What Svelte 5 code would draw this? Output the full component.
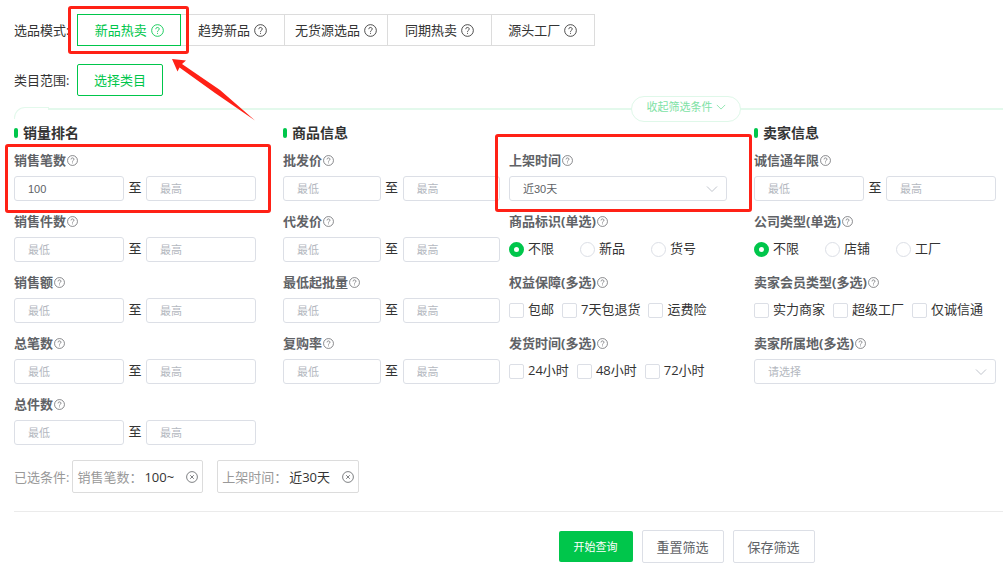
<script lang="ts">
	interface Field {
		label: string;
		kind: 'range' | 'select' | 'radio' | 'checkbox';
		name: string;
		low?: string;
		value?: string;
		options?: string[];
		marked?: boolean;
	}

	interface Section {
		title: string;
		columns: Field[][];
	}

	const modes = ['新品热卖', '趋势新品', '无货源选品', '同期热卖', '源头工厂'];
	let activeMode = $state('新品热卖');

	const sections: Section[] = [
		{
			title: '销量排名',
			columns: [
				[
					{ label: '销售笔数', kind: 'range', name: 'orders', low: '100', marked: true },
					{ label: '销售件数', kind: 'range', name: 'pieces' },
					{ label: '销售额', kind: 'range', name: 'sales' },
					{ label: '总笔数', kind: 'range', name: 'total-orders' },
					{ label: '总件数', kind: 'range', name: 'total-pieces' }
				]
			]
		},
		{
			title: '商品信息',
			columns: [
				[
					{ label: '批发价', kind: 'range', name: 'wholesale' },
					{ label: '代发价', kind: 'range', name: 'dropship' },
					{ label: '最低起批量', kind: 'range', name: 'minimum' },
					{ label: '复购率', kind: 'range', name: 'repurchase' }
				],
				[
					{ label: '上架时间', kind: 'select', name: 'listed', value: '近30天', marked: true },
					{ label: '商品标识(单选)', kind: 'radio', name: 'tag', options: ['不限', '新品', '货号'] },
					{
						label: '权益保障(多选)',
						kind: 'checkbox',
						name: 'rights',
						options: ['包邮', '7天包退货', '运费险']
					},
					{
						label: '发货时间(多选)',
						kind: 'checkbox',
						name: 'shipping',
						options: ['24小时', '48小时', '72小时']
					}
				]
			]
		},
		{
			title: '卖家信息',
			columns: [
				[
					{ label: '诚信通年限', kind: 'range', name: 'years' },
					{
						label: '公司类型(单选)',
						kind: 'radio',
						name: 'company',
						options: ['不限', '店铺', '工厂']
					},
					{
						label: '卖家会员类型(多选)',
						kind: 'checkbox',
						name: 'member',
						options: ['实力商家', '超级工厂', '仅诚信通']
					},
					{ label: '卖家所属地(多选)', kind: 'select', name: 'location' }
				]
			]
		}
	];

	let chips = $state([
		{ label: '销售笔数', value: '100~' },
		{ label: '上架时间', value: '近30天' }
	]);

	const removeChip = (label: string) => {
		chips = chips.filter((c) => c.label !== label);
	};
</script>

{#snippet help()}
	<svg class="help" viewBox="0 0 12 12" aria-hidden="true">
		<circle cx="6" cy="6" r="5.4" />
		<path d="M4.4 4.8C4.4 2.6 7.6 2.7 7.6 4.7C7.6 5.8 6 5.8 6 7.2M6 8.2V9.1" />
	</svg>
{/snippet}

{#snippet chevron()}
	<svg class="chevron" viewBox="0 0 12 12" aria-hidden="true">
		<path d="M1 3.5L6 8.5L11 3.5" />
	</svg>
{/snippet}

{#snippet fieldItem(field: Field)}
	<div class="field" role="group" aria-labelledby="{field.name}-label">
		<div class="field-label">
			{#if field.kind === 'select'}
				<label id="{field.name}-label" for={field.name}>{field.label}</label>
			{:else}
				<span id="{field.name}-label">{field.label}</span>
			{/if}
			{@render help()}
		</div>
		{#if field.kind === 'range'}
			<div class="range">
				<input type="text" placeholder="最低" aria-label="{field.label}最低" value={field.low ?? ''} />
				<span>至</span>
				<input type="text" placeholder="最高" aria-label="{field.label}最高" />
			</div>
		{:else if field.kind === 'select'}
			<div class="select">
				<select id={field.name} class:empty={!field.value}>
					<option>{field.value ?? '请选择'}</option>
				</select>
				{@render chevron()}
			</div>
		{:else}
			<div class="options {field.kind}">
				{#each field.options ?? [] as option, i}
					<label>
						{#if field.kind === 'radio'}
							<input type="radio" name={field.name} checked={i === 0} />
						{:else}
							<input type="checkbox" name={field.name} />
						{/if}
						<span>{option}</span>
					</label>
				{/each}
			</div>
		{/if}
		{#if field.marked}
			<div class="mark {field.kind}-mark"></div>
		{/if}
	</div>
{/snippet}

<main>
	<div class="row">
		<span class="row-label">选品模式:</span>
		<div class="modes">
			{#each modes as mode}
				<button class:active={mode === activeMode} onclick={() => (activeMode = mode)}>
					{mode}
					{@render help()}
				</button>
			{/each}
			<div class="mark mode-mark"></div>
			<svg class="arrow" viewBox="0 0 84 62" aria-hidden="true">
				<path d="M0 0L14 1.5L10 5L48 31L83 61.5L43 34L7.5 8.5L5.5 12.5Z" />
			</svg>
		</div>
	</div>
	<div class="row">
		<span class="row-label">类目范围:</span>
		<button class="category">选择类目</button>
	</div>

	<div class="panel">
		<button class="collapse">收起筛选条件 {@render chevron()}</button>
		<div class="sections">
			{#each sections as section}
				<section>
					<h2>{section.title}</h2>
					<div class="columns" class:double={section.columns.length > 1}>
						{#each section.columns as column}
							<div class="column">
								{#each column as field}
									{@render fieldItem(field)}
								{/each}
							</div>
						{/each}
					</div>
				</section>
			{/each}
		</div>
	</div>

	<div class="chosen">
		<span>已选条件:</span>
		{#each chips as chip}
			<div class="chip">
				<span>{chip.label}：</span>
				<b>{chip.value}</b>
				<button aria-label="删除{chip.label}" onclick={() => removeChip(chip.label)}>
					<svg viewBox="0 0 12 12" aria-hidden="true">
						<circle cx="6" cy="6" r="5.4" />
						<path d="M4.2 4.2L7.8 7.8M7.8 4.2L4.2 7.8" />
					</svg>
				</button>
			</div>
		{/each}
	</div>

	<div class="actions">
		<button class="primary">开始查询</button>
		<button>重置筛选</button>
		<button>保存筛选</button>
	</div>
</main>

<style>
	:global(body) {
		margin: 0;
		background: #fff;
	}

	main {
		padding: 14px 0 14px 14px;
		color: #333;
		font-family: 'Open Sans', 'Noto Sans CJK SC', sans-serif;
		font-size: 13px;
		line-height: 20px;
		overflow: hidden;
	}

	main * {
		box-sizing: border-box;
	}

	button,
	input,
	select {
		margin: 0;
		font-family: inherit;
		font-size: 13px;
		color: inherit;
	}

	button {
		padding: 0;
		background: #fff;
		line-height: 20px;
		white-space: nowrap;
		cursor: pointer;
	}

	svg {
		flex: none;
		fill: none;
		stroke: currentColor;
	}

	.help {
		width: 11px;
		height: 11px;
		stroke-width: 0.8;
	}

	.chevron {
		width: 12px;
		height: 12px;
	}

	.row {
		display: flex;
		align-items: center;
		margin-bottom: 18px;
	}

	.row-label {
		width: 63px;
		white-space: nowrap;
	}

	.modes {
		position: relative;
		display: flex;
		width: 518px;
	}

	.modes > button {
		display: flex;
		flex: 1;
		align-items: center;
		justify-content: center;
		gap: 4px;
		height: 32px;
		border: 1px solid #dcdcdc;
		border-left-width: 0;
	}

	.modes > button.active {
		border: 1px solid #00c64b;
		color: #00c64b;
	}

	.modes .help {
		width: 13px;
		height: 13px;
	}

	.category {
		width: 86px;
		height: 32px;
		border: 1px solid #00c64b;
		border-radius: 2px;
		color: #00c64b;
	}

	/* annotation frames and arrow, laid over the form */
	.mark {
		position: absolute;
		z-index: 2;
		border: 3px solid #ff2116;
		border-radius: 3px;
		pointer-events: none;
	}

	.mode-mark {
		top: -8px;
		left: -9px;
		width: 121px;
		height: 48px;
	}

	.range-mark {
		inset: -6px -15px -12px -9px;
	}

	.select-mark {
		inset: -16px -25px -11px -14px;
	}

	.arrow {
		position: absolute;
		z-index: 2;
		top: 45px;
		left: 95px;
		width: 84px;
		height: 62px;
		fill: #ff2116;
		stroke: none;
		pointer-events: none;
	}

	.panel {
		position: relative;
		margin-top: -18px;
	}

	.panel::before {
		content: '';
		position: absolute;
		top: 11px;
		left: 0;
		width: 34px;
		height: 11px;
		border: 1px solid #e3f9ec;
		border-width: 1px 0 0 1px;
		border-radius: 11px 0 0 0;
	}

	.panel::after {
		content: '';
		position: absolute;
		top: 12px;
		left: 34px;
		right: 0;
		height: 2px;
		background: #e3f9ec;
	}

	.collapse {
		position: relative;
		z-index: 1;
		display: flex;
		align-items: center;
		justify-content: center;
		gap: 3px;
		width: 110px;
		height: 26px;
		margin-left: auto;
		margin-right: 262px;
		padding-bottom: 4px;
		border: 1px solid #dff8e9;
		border-radius: 13px;
		color: #80e2a5;
		font-size: 11px;
	}

	.collapse .chevron {
		width: 10px;
		height: 10px;
	}

	.sections {
		display: grid;
		grid-template-columns: 242fr 444fr 242fr;
		gap: 27px;
		padding-right: 7px;
	}

	h2 {
		display: flex;
		align-items: center;
		gap: 5px;
		margin: 0 0 6px;
		font-size: 14px;
		line-height: 22px;
		font-weight: 700;
	}

	h2::before {
		content: '';
		width: 4px;
		height: 10px;
		border-radius: 2px;
		background: #00c64b;
	}

	.columns {
		display: grid;
		gap: 9px;
	}

	.columns.double {
		grid-template-columns: 217fr 218fr;
	}

	.field {
		position: relative;
		margin-bottom: 10px;
	}

	.field-label {
		display: flex;
		align-items: center;
		gap: 1px;
		height: 20px;
		margin-bottom: 6px;
		color: #606266;
		font-weight: 700;
		white-space: nowrap;
	}

	.range {
		display: flex;
		align-items: center;
	}

	.range span,
	.options span {
		padding-bottom: 4px;
	}

	.range span {
		flex: none;
		width: 22px;
		text-align: center;
	}

	.range input,
	select {
		flex: 1;
		min-width: 0;
		width: 100%;
		height: 25px;
		padding: 0 13px;
		border: 1px solid #dcdfe6;
		border-radius: 3px;
		background: #fff;
		color: #606266;
		font-family: 'Liberation Sans', 'Noto Sans CJK SC', sans-serif;
		font-size: 11px;
	}

	.range input::placeholder,
	select.empty {
		color: #b4b8c0;
	}

	select {
		display: block;
		appearance: none;
	}

	.select {
		position: relative;
	}

	.select .chevron {
		position: absolute;
		top: 7px;
		right: 9px;
		color: #c0c4cc;
		pointer-events: none;
	}

	.options {
		display: flex;
		align-items: center;
		gap: 8px;
		height: 25px;
	}

	.options.radio {
		gap: 26px;
	}

	.options label {
		display: flex;
		align-items: center;
		gap: 4px;
		white-space: nowrap;
	}

	.options input {
		appearance: none;
		width: 15px;
		height: 15px;
		border: 1px solid #dcdfe6;
		border-radius: 2px;
		background: #fff;
	}

	.options.radio input {
		border-radius: 50%;
	}

	.options.radio input:checked {
		border: 5px solid #00c64b;
	}

	.chosen {
		display: flex;
		align-items: center;
		margin-top: 5px;
		padding-bottom: 18px;
		border-bottom: 1px solid #ebebeb;
		color: #999;
	}

	.chip {
		display: flex;
		align-items: center;
		height: 33px;
		margin: 0 11px 0 3px;
		padding: 0 4px;
		border: 1px solid #dcdcdc;
		border-radius: 2px;
	}

	.chip b {
		margin: 0 12px 0 2px;
		color: #333;
		font-weight: 400;
	}

	.chip button {
		display: flex;
		border: 0;
		color: #606266;
	}

	.chip svg {
		width: 12px;
		height: 12px;
		stroke-width: 0.8;
	}

	.actions {
		display: flex;
		align-items: center;
		justify-content: center;
		gap: 9px;
		padding: 18px 0 0 36%;
	}

	.actions button {
		width: 82px;
		height: 33px;
		border: 1px solid #dcdfe6;
		border-radius: 2px;
		color: #606266;
	}

	.actions .primary {
		width: 74px;
		height: 31px;
		border: 0;
		background: #00c64b;
		color: #fff;
		font-size: 11px;
	}
</style>
